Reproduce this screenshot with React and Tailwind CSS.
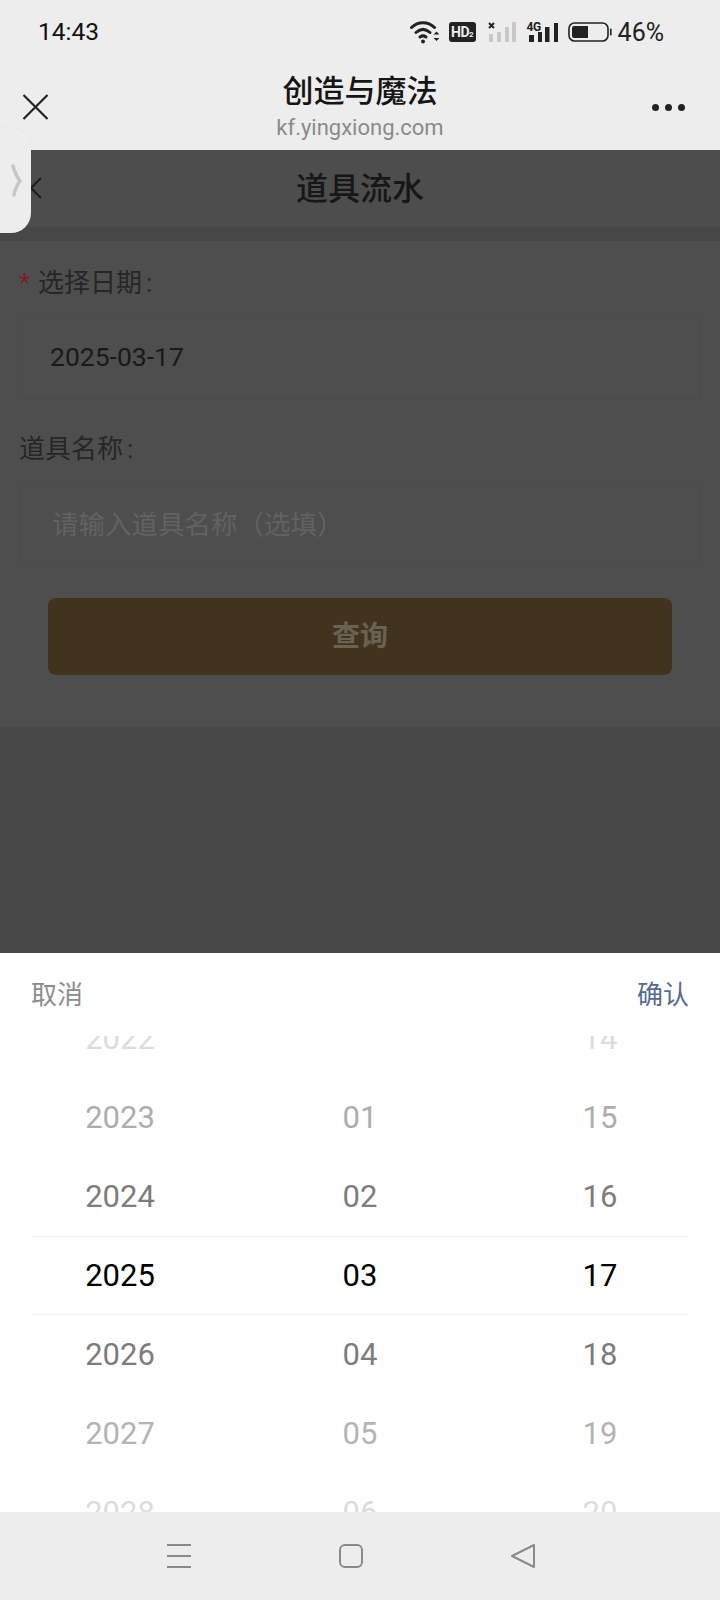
import React from "react";

const cjk = "font-['Roboto','Noto_Sans_CJK_SC',sans-serif]";

const rows = [
  { year: "2022", month: "", day: "14", color: "text-[#dcdcdc]" },
  { year: "2023", month: "01", day: "15", color: "text-[#adadad]" },
  { year: "2024", month: "02", day: "16", color: "text-[#7d7d7d]" },
  { year: "2025", month: "03", day: "17", color: "text-black" },
  { year: "2026", month: "04", day: "18", color: "text-[#7d7d7d]" },
  { year: "2027", month: "05", day: "19", color: "text-[#b4b4b4]" },
  { year: "2028", month: "06", day: "20", color: "text-[#dcdcdc]" },
];

const StatusIcons = () => (
  <div className="flex items-center">
    {/* wifi */}
    <svg width="30" height="24" viewBox="0 0 30 24" fill="none" stroke="#222" strokeWidth="3" strokeLinecap="round">
      <path d="M1.5 7.5 C8 1 18 1 24.5 7.5" />
      <path d="M6 12.5 C10.5 8.5 15.5 8.5 20 12.5" />
      <path d="M10 17 C12 15.5 14 15.5 16 17" />
      <circle cx="13" cy="21.5" r="2" fill="#222" stroke="none" />
      <path d="M23.5 14.5 L26.5 11.5 L29.5 14.5 Z M23.5 18 L26.5 21 L29.5 18 Z" fill="#222" stroke="none" />
    </svg>
    {/* HD badge */}
    <div className="ml-[9px] w-[27px] h-[20px] rounded-[3px] bg-[#222] flex items-center justify-center font-['Roboto',sans-serif] font-bold text-[14px] leading-none text-[#ededed] tracking-[-0.5px]">
      HD<span className="text-[8px] mt-[5px]">2</span>
    </div>
    {/* sim 1, no service */}
    <svg className="ml-[12px]" width="28" height="22" viewBox="0 0 28 22">
      <path d="M1 2 L6 7 M6 2 L1 7" stroke="#222" strokeWidth="2" />
      <rect x="1" y="13" width="4" height="8" fill="#c8c8c8" />
      <rect x="9" y="11" width="4" height="10" fill="#c8c8c8" />
      <rect x="17" y="6" width="4" height="15" fill="#c8c8c8" />
      <rect x="24" y="1" width="4" height="20" fill="#c8c8c8" />
    </svg>
    {/* sim 2, 4G */}
    <div className="relative ml-[11px] w-[31px] h-[22px]">
      <span className="absolute left-0 top-0 font-['Roboto',sans-serif] font-bold text-[12px] leading-none text-[#222] tracking-[-0.5px]">4G</span>
      <svg className="absolute left-0 top-0" width="31" height="22" viewBox="0 0 31 22" fill="#222">
        <rect x="2" y="14" width="5" height="7" />
        <rect x="11" y="11" width="4" height="10" />
        <rect x="18" y="6" width="4.5" height="15" />
        <rect x="27" y="2" width="4" height="19" />
      </svg>
    </div>
    {/* battery */}
    <svg className="ml-[10px]" width="44" height="20" viewBox="0 0 44 20">
      <rect x="1" y="1" width="39" height="18" rx="5.5" fill="none" stroke="#222" strokeWidth="1.6" />
      <path d="M6 4 H20 V16 H6 A2 2 0 0 1 4 14 V6 A2 2 0 0 1 6 4 Z" fill="#222" />
      <rect x="42" y="6.5" width="1.6" height="7" rx="0.8" fill="#222" />
    </svg>
    <span className="ml-[6px] font-['Roboto',sans-serif] text-[25px] leading-none text-[#222]">46%</span>
  </div>
);

export default function App() {
  return (
    <div className={`relative w-[720px] h-[1600px] overflow-hidden flex flex-col bg-[#484848] ${cjk}`}>
      {/* status bar */}
      <div className="h-[64px] shrink-0 bg-[#ededed] flex items-center justify-between pl-[38px] pr-[56px]">
        <span className="text-[24.5px] leading-none text-[#111]">14:43</span>
        <StatusIcons />
      </div>

      {/* webview title bar */}
      <div className="h-[86px] shrink-0 bg-[#ededed] flex items-center">
        <div className="w-[100px] pl-[22px]">
          <svg width="27" height="26" viewBox="0 0 27 26" fill="none" stroke="#222" strokeWidth="2.2">
            <path d="M1.5 1 L25.5 25 M25.5 1 L1.5 25" />
          </svg>
        </div>
        <div className="flex-1 flex flex-col items-center">
          <span className="text-[31px] leading-[40px] font-medium text-[#151515]">创造与魔法</span>
          <span className="text-[22px] leading-[28px] mt-[2px] text-[#8a8a8a]">kf.yingxiong.com</span>
        </div>
        <div className="w-[100px] flex justify-end pr-[35px] gap-[6px]">
          <span className="w-[7px] h-[7px] rounded-full bg-[#222]" />
          <span className="w-[7px] h-[7px] rounded-full bg-[#222]" />
          <span className="w-[7px] h-[7px] rounded-full bg-[#222]" />
        </div>
      </div>

      {/* page under the mask */}
      <div className="h-[77px] shrink-0 bg-[#4d4d4d] relative flex items-center justify-center">
        <svg className="absolute left-[29px] top-[27px]" width="13" height="22" viewBox="0 0 13 22" fill="none" stroke="#1c1c1c" strokeWidth="2">
          <path d="M12 1 L2 11 L12 21" />
        </svg>
        <span className="text-[32px] leading-none font-medium text-[#171717]">道具流水</span>
      </div>
      <div className="h-[14px] shrink-0 bg-[#474747]" />
      <div className="shrink-0 bg-[#4e4e4e] pt-[24px] pb-[52px]">
        <div className="flex items-center h-[36px] pl-[19px] text-[26px] leading-[36px] text-[#262626]">
          <span className="w-[19px] text-[#762222]">*</span>
          <span>选择日期<span className="ml-[4px]">:</span></span>
        </div>
        <div className="mt-[15px] ml-[21px] mr-[20px] h-[84px] pb-[2px] border border-[#4b4b4b] flex items-center pl-[28px] text-[26.5px] text-[#191919]">
          2025-03-17
        </div>
        <div className="mt-[31px] h-[36px] pl-[19px] text-[26px] leading-[36px] text-[#262626]">
          道具名称<span className="ml-[4px]">:</span>
        </div>
        <div className="mt-[15px] ml-[20px] mr-[20px] h-[85px] border border-[#4b4b4b] flex items-center pl-[31px] text-[26.5px] text-[#626262]">
          请输入道具名称（选填）
        </div>
        <div className="mt-[31px] mx-[48px] h-[77px] rounded-[8px] bg-[#42331c] flex items-center justify-center text-[28px] font-bold text-[#6a6254]">
          查询
        </div>
      </div>
      <div className="flex-1" />

      {/* date picker sheet */}
      <div className="h-[559px] shrink-0 bg-white flex flex-col overflow-hidden">
        <div className="h-[83px] shrink-0 flex justify-between px-[31px] pt-[24px] text-[26px] leading-[36px]">
          <span className="text-[#8c8c8c]">取消</span>
          <span className="text-[#566b90]">确认</span>
        </div>
        <div className="relative flex-1 overflow-hidden">
          <div className="-mt-[36px]">
            {rows.map((r) => (
              <div key={r.year} className={`h-[79px] grid grid-cols-3 items-center text-center text-[31px] ${r.color}`}>
                <span>{r.year}</span>
                <span>{r.month}</span>
                <span>{r.day}</span>
              </div>
            ))}
          </div>
          {/* selection lines */}
          <div className="absolute left-[31px] right-[31px] top-[200px] h-[79px] border-y border-[#f3f3f3]" />
        </div>
      </div>

      {/* android nav bar */}
      <div className="h-[88px] shrink-0 bg-[#ededed] flex items-start justify-center pt-[32px] pr-[18px] gap-[148px]">
        <svg width="24" height="24" viewBox="0 0 24 24" stroke="#8a8a8a" strokeWidth="2">
          <path d="M0 1 H24 M0 12 H24 M0 23 H24" />
        </svg>
        <svg width="24" height="24" viewBox="0 0 24 24" fill="none" stroke="#8a8a8a" strokeWidth="2">
          <rect x="1" y="1" width="22" height="22" rx="5" />
        </svg>
        <svg width="24" height="24" viewBox="0 0 24 24" fill="none" stroke="#8a8a8a" strokeWidth="2" strokeLinejoin="round">
          <path d="M23 1 V23 L1 12 Z" />
        </svg>
      </div>

      {/* side pull tab */}
      <div className="absolute z-10 left-0 top-[128px] w-[31px] h-[105px] rounded-r-[20px] bg-[#ededed] shadow-[0_0_2px_rgba(0,0,0,0.06)] flex items-center">
        <svg className="ml-[11px]" width="11" height="33" viewBox="0 0 11 33" fill="none" stroke="#c6c6c6" strokeWidth="3.5" strokeLinecap="round">
          <path d="M2 2 C4 9 6 13 9 17 C6 21 4 25 3 31" />
        </svg>
      </div>
    </div>
  );
}
